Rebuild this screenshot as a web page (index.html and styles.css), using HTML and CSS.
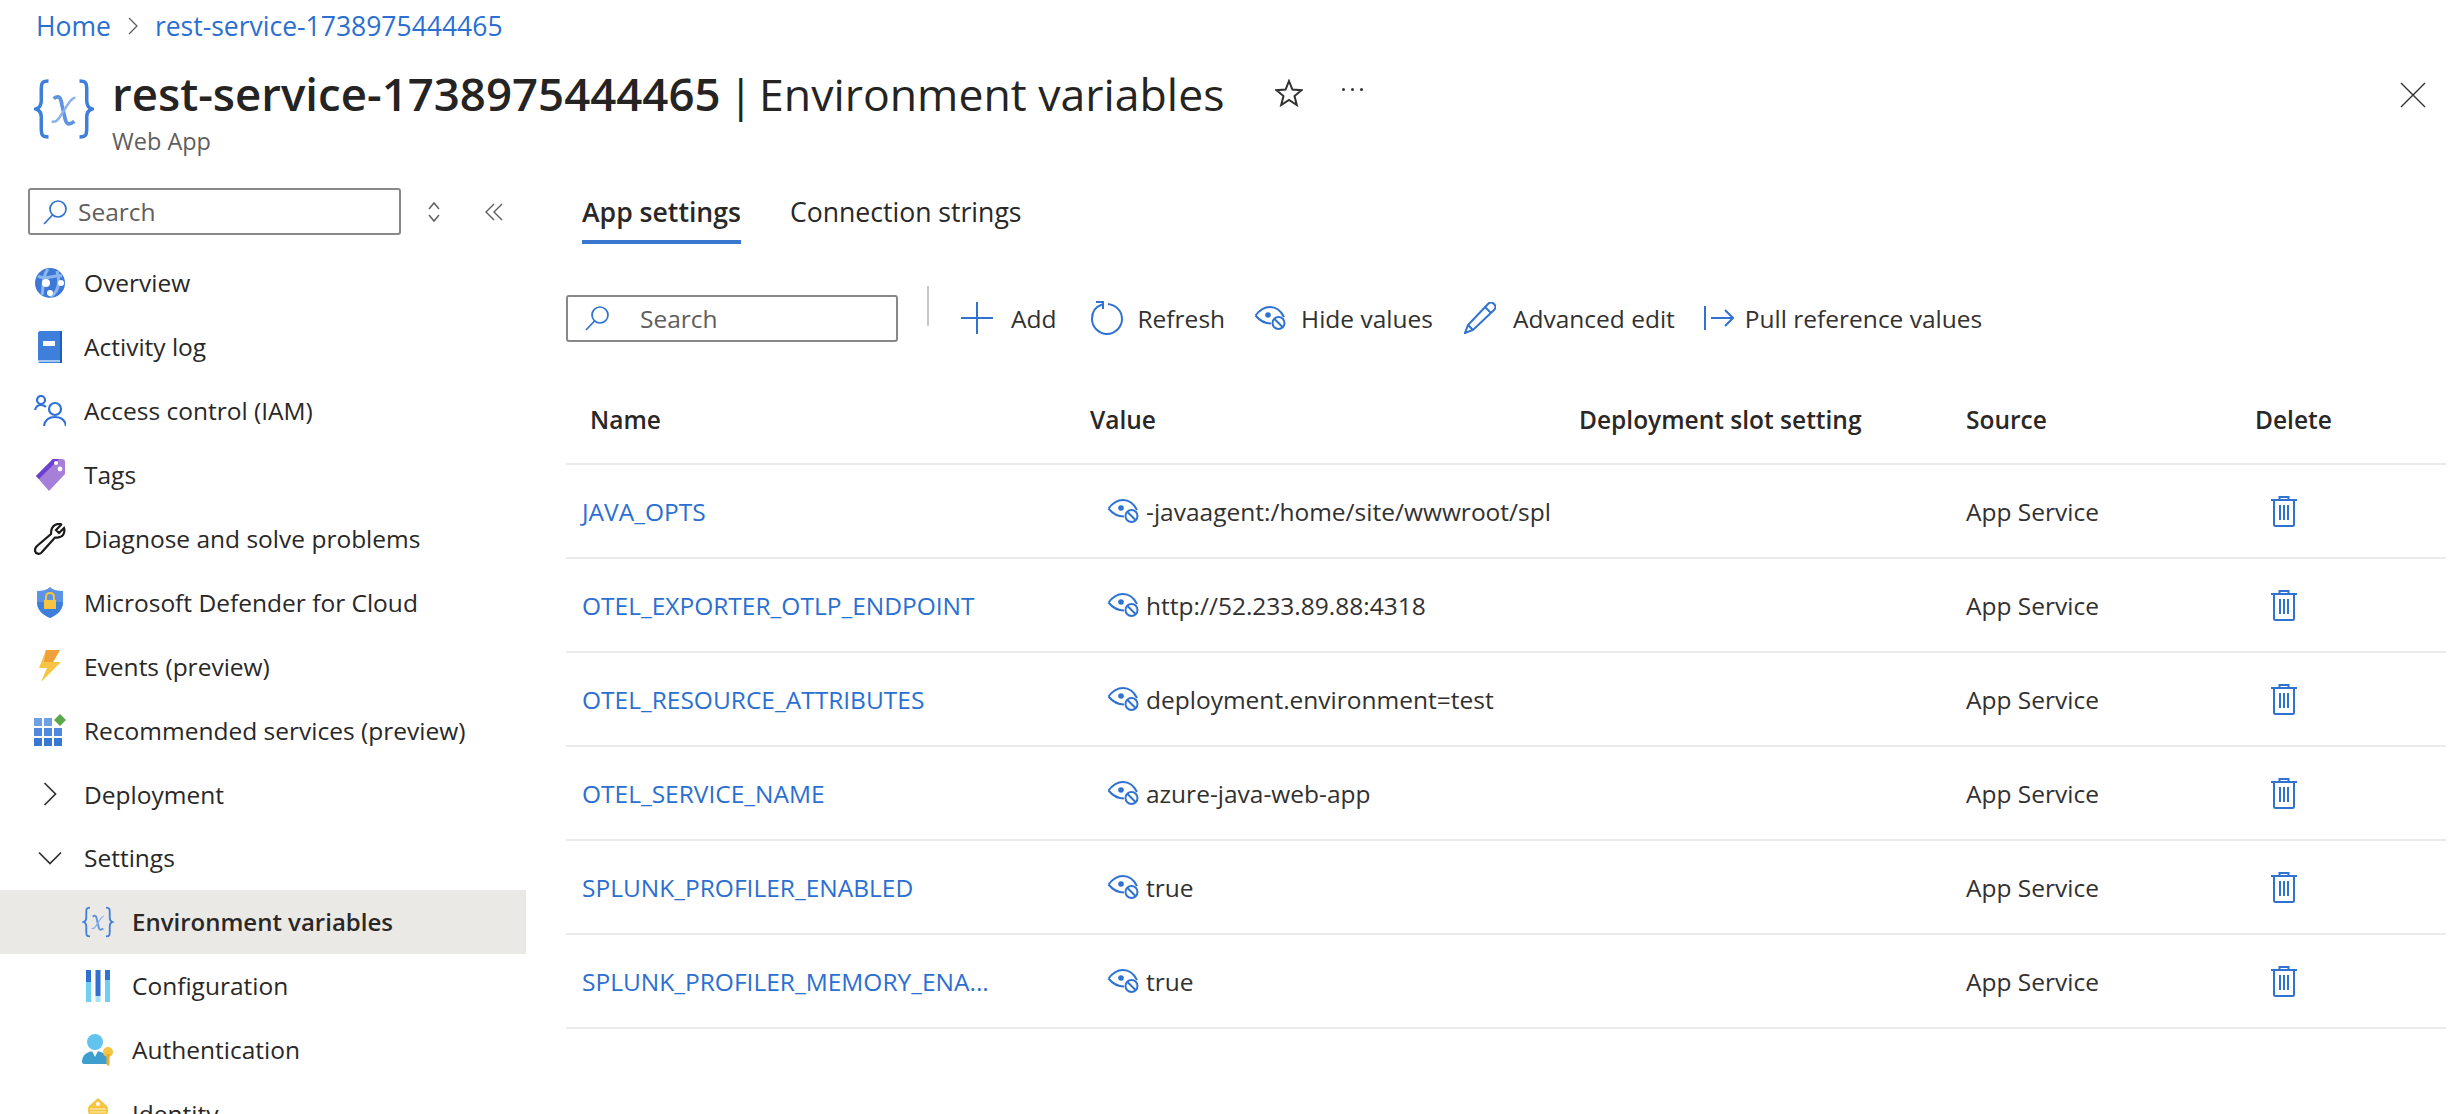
FILE: index.html
```html
<!DOCTYPE html>
<html lang="en">
<head>
  <meta charset="UTF-8">
  <title>rest-service-1738975444465 | Environment variables</title>
  <link rel="stylesheet" href="styles.css">
</head>
<body>
  <!-- Shared icons -->
  <svg class="sprite" width="0" height="0">
    <defs>
      <symbol id="i-envvar" viewBox="0 0 58 60">
        <path d="M14 3C7 3 7 6 7 12V22C7 27 5 29 2 30C5 31 7 33 7 38V48C7 54 7 57 14 57" fill="none" stroke="#3f7fdc" stroke-width="3.4"/>
        <path d="M44 3C51 3 51 6 51 12V22C51 27 53 29 56 30C53 31 51 33 51 38V48C51 54 51 57 44 57" fill="none" stroke="#3f7fdc" stroke-width="3.4"/>
        <path d="M19 20C24 16 26 19 27 26L30 39C31 45 34 46 39 42" fill="none" stroke="#5e93e4" stroke-width="3.6"/>
        <path d="M40 19C35 19 30 31 24 39C22 42 20 43 17 42" fill="none" stroke="#8ab2ee" stroke-width="2.4"/>
      </symbol>
      <symbol id="i-search" viewBox="0 0 26 26">
        <circle cx="16" cy="10" r="8" fill="none" stroke="#2f72d2" stroke-width="1.7"/>
        <path d="M10.5 16L2 25" fill="none" stroke="#2f72d2" stroke-width="1.7"/>
      </symbol>
      <symbol id="i-eyeoff" viewBox="0 0 32 24">
        <path d="M1.5 9.5C6 3.500 11 1 16 1C22 1 27 5 30 11" fill="none" stroke="#2f72d2" stroke-width="2"/>
        <path d="M1.5 9.5C6 15 10 17.5 17 17.5" fill="none" stroke="#2f72d2" stroke-width="2"/>
        <circle cx="14" cy="9" r="2.8" fill="#2f72d2"/>
        <circle cx="24.5" cy="17" r="6" fill="#fff" stroke="#2f72d2" stroke-width="2"/>
        <path d="M20.5 13L28.5 21" stroke="#2f72d2" stroke-width="2"/>
      </symbol>
      <symbol id="i-trash" viewBox="0 0 28 32">
        <path d="M1 5H27M9.5 5V2H18.5V5" fill="none" stroke="#2f72d2" stroke-width="2"/>
        <path d="M4 5V29.5C4 30.5 4.6 31 5.5 31H22.5C23.4 31 24 30.5 24 29.5V5" fill="none" stroke="#2f72d2" stroke-width="2"/>
        <path d="M10 10V25M14 10V25M18 10V25" stroke="#2f72d2" stroke-width="2"/>
      </symbol>
    </defs>
  </svg>

  <nav class="breadcrumb">
    <a href="#">Home</a>
    <svg class="crumb-sep" width="12" height="18" viewBox="0 0 12 18"><path d="M2 1L10 9L2 17" fill="none" stroke="#605e5c" stroke-width="1.3"/></svg>
    <a href="#">rest-service-1738975444465</a>
  </nav>

  <header class="page-header">
    <svg class="header-icon" width="60" height="62"><use href="#i-envvar"/></svg>
    <div class="header-text">
      <div class="title-row">
        <h1 class="title"><b>rest-service-1738975444465</b><span class="title-sep">|</span>Environment variables</h1>
        <svg class="star" width="28" height="28" viewBox="0 0 28 28"><path d="M14 2L17.4 10.6L26.5 11.2L19.5 17L21.8 26L14 21L6.2 26L8.5 17L1.5 11.2L10.6 10.6Z" fill="none" stroke="#323130" stroke-width="2"/></svg>
        <span class="more"><i></i><i></i><i></i></span>
      </div>
      <div class="subtitle">Web App</div>
    </div>
    <svg class="close" width="26" height="26" viewBox="0 0 26 26"><path d="M1 1L25 25M25 1L1 25" stroke="#323130" stroke-width="1.4"/></svg>
  </header>

  <div class="content">
    <aside class="sidebar">
      <div class="side-search-row">
        <div class="search-box side-search">
          <svg width="26" height="26"><use href="#i-search"/></svg>
          <span>Search</span>
        </div>
        <svg class="side-sort" width="14" height="22" viewBox="0 0 14 22"><path d="M2 8L7 2L12 8M2 14L7 20L12 14" fill="none" stroke="#605e5c" stroke-width="1.5"/></svg>
        <svg class="side-collapse" width="18" height="18" viewBox="0 0 18 18"><path d="M9 1L1 9L9 17M17 1L9 9L17 17" fill="none" stroke="#605e5c" stroke-width="1.4"/></svg>
      </div>

      <ul class="nav">
        <li class="nav-item">
          <span class="nav-icon"><svg width="30" height="30" viewBox="0 0 30 30"><circle cx="15" cy="15" r="15" fill="#3d78d8"/><path d="M3 8C10 13 20 6 27 8M7 27C9 20 6 10 13 1M15 29C24 24 25 14 22 3" fill="none" stroke="#8cb6ee" stroke-width="3"/><circle cx="11" cy="15" r="4" fill="#fff"/><circle cx="26" cy="15" r="3" fill="#fff"/><circle cx="15" cy="25" r="3" fill="#fff"/></svg></span>
          Overview
        </li>
        <li class="nav-item">
          <span class="nav-icon"><svg width="26" height="32" viewBox="0 0 26 32"><path d="M1 2C1 1 2 0 3 0H25V32H3C2 32 1 31 1 30Z" fill="#3f7fdc"/><path d="M23 0H25V32H23Z" fill="#1f5fb8"/><path d="M1 29H23V31H1Z" fill="#a9c8f2"/><path d="M6 10H18V15H6Z" fill="#fff"/></svg></span>
          Activity log
        </li>
        <li class="nav-item">
          <span class="nav-icon"><svg width="32" height="32" viewBox="0 0 32 32"><g fill="none" stroke="#2f6fdc" stroke-width="2.2"><circle cx="7" cy="5" r="4"/><path d="M1 15C2 11 4 10 7 10C9 10 11 11 12 12"/><circle cx="21" cy="14" r="6"/><path d="M10 31C11 25 15 22 21 22C27 22 31 25 32 31"/></g></svg></span>
          Access control (IAM)
        </li>
        <li class="nav-item">
          <span class="nav-icon"><svg width="30" height="32" viewBox="0 0 30 32"><path d="M1 17L18 0H27C29 0 30 1 30 3V15L14 32Z" fill="#a57fd8"/><path d="M1 17L18 0H24L4 20Z" fill="#6b3fd0"/><circle cx="21" cy="4" r="2" fill="#fff"/><circle cx="25" cy="10" r="2.4" fill="#fff"/></svg></span>
          Tags
        </li>
        <li class="nav-item">
          <span class="nav-icon"><svg width="32" height="32" viewBox="0 0 32 32"><path d="M21 2C25 0 28 1 27 2L22 7L25 10L30 5C31 8 30 13 26 14C24 15 22 14.500 21 14.500L8 29C6 32 1 31 1 27C1 25 2 24 3 23L17 11C17 8 17 4 21 2Z" fill="none" stroke="#1b1a19" stroke-width="2.200"/></svg></span>
          Diagnose and solve problems
        </li>
        <li class="nav-item">
          <span class="nav-icon"><svg width="26" height="31" viewBox="0 0 26 31"><path d="M13 0C16 3 21 4 26 4V15C26 23 20 28 13 31C6 28 0 23 0 15V4C5 4 10 3 13 0Z" fill="#5b93e6"/><path d="M13 31C6 28 0 23 0 15L26 15C26 23 20 28 13 31Z" fill="#3f7fdc"/><path d="M9 13V10C9 7 11 6 13 6C15 6 17 7 17 10V13" fill="none" stroke="#f6c443" stroke-width="2"/><path d="M7 13H19V22H7Z" fill="#f6c443"/></svg></span>
          Microsoft Defender for Cloud
        </li>
        <li class="nav-item">
          <span class="nav-icon"><svg width="22" height="32" viewBox="0 0 22 32"><path d="M7 0H21L14 12H22L2 32L8 18H0Z" fill="#f6c443"/><path d="M7 0H21L14 12H5Z" fill="#f0a03a"/></svg></span>
          Events (preview)
        </li>
        <li class="nav-item">
          <span class="nav-icon"><svg width="32" height="32" viewBox="0 0 32 32"><g fill="#6fa0e6"><rect x="0" y="4" width="8" height="8"/><rect x="10" y="4" width="8" height="8"/></g><g fill="#4f88de"><rect x="0" y="14" width="8" height="8"/><rect x="10" y="14" width="8" height="8"/><rect x="20" y="14" width="8" height="8"/></g><g fill="#3a76d4"><rect x="0" y="24" width="8" height="8"/><rect x="10" y="24" width="8" height="8"/><rect x="20" y="24" width="8" height="8"/></g><path d="M26 0L32 6L26 12L20 6Z" fill="#5ea84c"/></svg></span>
          Recommended services (preview)
        </li>
        <li class="nav-item">
          <span class="nav-icon"><svg width="14" height="24" viewBox="0 0 14 24"><path d="M1.500 1L12.500 12L1.500 23" fill="none" stroke="#323130" stroke-width="1.700"/></svg></span>
          Deployment
        </li>
        <li class="nav-item">
          <span class="nav-icon"><svg width="24" height="14" viewBox="0 0 24 14"><path d="M1 1.500L12 12.500L23 1.500" fill="none" stroke="#323130" stroke-width="1.700"/></svg></span>
          Settings
        </li>
        <li class="nav-item sub selected">
          <span class="nav-icon"><svg width="32" height="32"><use href="#i-envvar"/></svg></span>
          Environment variables
        </li>
        <li class="nav-item sub">
          <span class="nav-icon"><svg width="24" height="32" viewBox="0 0 24 32"><rect x="0" y="0" width="5" height="12" fill="#2f72d2"/><rect x="0" y="12" width="5" height="20" fill="#6fd0f2"/><rect x="9.500" y="0" width="5" height="26" fill="#2f72d2"/><rect x="9.500" y="26" width="5" height="6" fill="#a8e2f7"/><rect x="19" y="0" width="5" height="10" fill="#2f72d2"/><rect x="19" y="10" width="5" height="22" fill="#6fd0f2"/></svg></span>
          Configuration
        </li>
        <li class="nav-item sub">
          <span class="nav-icon"><svg width="32" height="32" viewBox="0 0 32 32"><circle cx="13" cy="8" r="8" fill="#62c3ee"/><path d="M0 28C0 21 5 17 13 17C21 17 26 21 26 28V30H2C1 30 0 29 0 28Z" fill="#3e9fcf"/><path d="M10 17H16L13 23Z" fill="#fff"/><circle cx="26" cy="18" r="5" fill="#f6c443"/><path d="M24.500 20H27.500V31L26 32L24.500 30Z" fill="#f0a92e"/></svg></span>
          Authentication
        </li>
        <li class="nav-item sub">
          <span class="nav-icon"><svg width="20" height="32" viewBox="0 0 20 32"><path d="M10 0L18 7C20 8 20 10 20 13C20 17 17 18 10 18C3 18 0 17 0 13C0 10 0 8 2 7Z" fill="#f6c443"/><circle cx="10" cy="6" r="2" fill="#fff"/><path d="M2 11H18M2 14H18" stroke="#fbe49a" stroke-width="1.500"/></svg></span>
          Identity
        </li>
      </ul>
    </aside>

    <main class="main">
      <div class="tabs">
        <a class="tab active" href="#">App settings</a>
        <a class="tab" href="#">Connection strings</a>
      </div>

      <div class="toolbar">
        <div class="search-box main-search">
          <svg width="26" height="26"><use href="#i-search"/></svg>
          <span>Search</span>
        </div>
        <span class="tool-divider"></span>
        <button class="tool add">
          <svg width="32" height="32" viewBox="0 0 32 32"><path d="M16 0V32M0 16H32" stroke="#2f72d2" stroke-width="2"/></svg>
          Add
        </button>
        <button class="tool refresh">
          <svg width="32" height="34" viewBox="0 0 32 34"><path d="M11 3.500C4 6 1 11 1 18C1 26 8 33 16 33C24 33 31 26 31 18C31 10 25 4 17 3" fill="none" stroke="#2f72d2" stroke-width="2"/><path d="M5 1H12V8" fill="none" stroke="#2f72d2" stroke-width="2"/></svg>
          Refresh
        </button>
        <button class="tool hide">
          <svg width="32" height="24"><use href="#i-eyeoff"/></svg>
          Hide values
        </button>
        <button class="tool edit">
          <svg width="32" height="32" viewBox="0 0 32 32"><path d="M24 2C26 0 28 0 30 2C32 4 32 6 30 8L9 28L1 31L4 23Z M4 23L9 28 M21 5L27 11" fill="none" stroke="#2f72d2" stroke-width="2"/></svg>
          Advanced edit
        </button>
        <button class="tool pull">
          <svg width="30" height="26" viewBox="0 0 30 26"><path d="M1 1V25M7 13H29M21 5L29 13L21 21" fill="none" stroke="#2f72d2" stroke-width="2"/></svg>
          Pull reference values
        </button>
      </div>

      <div class="table">
        <div class="row head">
          <div class="cell name">Name</div>
          <div class="cell">Value</div>
          <div class="cell">Deployment slot setting</div>
          <div class="cell">Source</div>
          <div class="cell">Delete</div>
        </div>
        <div class="row">
          <div class="cell name"><a href="#">JAVA_OPTS</a></div>
          <div class="cell value"><svg width="32" height="24"><use href="#i-eyeoff"/></svg><span>-javaagent:/home/site/wwwroot/spl</span></div>
          <div class="cell"></div>
          <div class="cell">App Service</div>
          <div class="cell trash"><svg width="28" height="32"><use href="#i-trash"/></svg></div>
        </div>
        <div class="row">
          <div class="cell name"><a href="#">OTEL_EXPORTER_OTLP_ENDPOINT</a></div>
          <div class="cell value"><svg width="32" height="24"><use href="#i-eyeoff"/></svg><span>http://52.233.89.88:4318</span></div>
          <div class="cell"></div>
          <div class="cell">App Service</div>
          <div class="cell trash"><svg width="28" height="32"><use href="#i-trash"/></svg></div>
        </div>
        <div class="row">
          <div class="cell name"><a href="#">OTEL_RESOURCE_ATTRIBUTES</a></div>
          <div class="cell value"><svg width="32" height="24"><use href="#i-eyeoff"/></svg><span>deployment.environment=test</span></div>
          <div class="cell"></div>
          <div class="cell">App Service</div>
          <div class="cell trash"><svg width="28" height="32"><use href="#i-trash"/></svg></div>
        </div>
        <div class="row">
          <div class="cell name"><a href="#">OTEL_SERVICE_NAME</a></div>
          <div class="cell value"><svg width="32" height="24"><use href="#i-eyeoff"/></svg><span>azure-java-web-app</span></div>
          <div class="cell"></div>
          <div class="cell">App Service</div>
          <div class="cell trash"><svg width="28" height="32"><use href="#i-trash"/></svg></div>
        </div>
        <div class="row">
          <div class="cell name"><a href="#">SPLUNK_PROFILER_ENABLED</a></div>
          <div class="cell value"><svg width="32" height="24"><use href="#i-eyeoff"/></svg><span>true</span></div>
          <div class="cell"></div>
          <div class="cell">App Service</div>
          <div class="cell trash"><svg width="28" height="32"><use href="#i-trash"/></svg></div>
        </div>
        <div class="row">
          <div class="cell name"><a href="#">SPLUNK_PROFILER_MEMORY_ENA...</a></div>
          <div class="cell value"><svg width="32" height="24"><use href="#i-eyeoff"/></svg><span>true</span></div>
          <div class="cell"></div>
          <div class="cell">App Service</div>
          <div class="cell trash"><svg width="28" height="32"><use href="#i-trash"/></svg></div>
        </div>
      </div>
    </main>
  </div>
</body>
</html>
```

FILE: styles.css
```css
/* Page */
html, body {
  height: 100%;
}
body {
  margin: 0;
  background: #fff;
  color: #323130;
  font-family: "Open Sans", "Noto Sans", sans-serif;
  font-size: 24.5px;
  overflow: hidden;
}
a {
  color: #2b6fd1;
  text-decoration: none;
}
.sprite {
  display: block;
  height: 0;
}

/* Breadcrumb */
.breadcrumb {
  display: flex;
  align-items: center;
  height: 52px;
  padding-left: 36px;
  gap: 16px;
  font-size: 26.5px;
}

/* Header */
.page-header {
  display: flex;
  align-items: flex-start;
  padding: 22px 34px 0 34px;
  height: 114px;
  box-sizing: border-box;
}
.header-icon {
  margin-top: 4px;
  flex: none;
}
.header-text {
  margin-left: 18px;
  flex: 1;
}
.title-row {
  display: flex;
  align-items: center;
  height: 38px;
}
.title {
  margin: 0;
  font-size: 44.6px;
  font-weight: 400;
  color: #252423;
  white-space: nowrap;
}
.title b {
  font-size: 45.6px;
  font-weight: 600;
}
.title-sep {
  margin: 0 6px 0 8px;
}
.star {
  margin-left: 51px;
}
.more {
  display: flex;
  gap: 6px;
  margin-left: 39px;
  margin-bottom: 8px;
}
.more i {
  width: 3px;
  height: 3px;
  background: #323130;
  border-radius: 50%;
}
.subtitle {
  margin-top: 13px;
  font-size: 23.5px;
  color: #605e5c;
}
.close {
  margin-top: 8px;
}

/* Search boxes */
.search-box {
  display: flex;
  align-items: center;
  box-sizing: border-box;
  border: 2px solid #8a8886;
  border-radius: 3px;
  color: #605e5c;
}

/* Layout below the header */
.content {
  display: flex;
}
.sidebar {
  width: 526px;
  flex: none;
}
.side-search-row {
  display: flex;
  align-items: center;
  padding: 22px 0 0 28px;
  height: 47px;
}
.side-search {
  width: 373px;
  height: 47px;
  padding-left: 12px;
  gap: 10px;
}
.side-sort {
  margin-left: 26px;
}
.side-collapse {
  margin-left: 44px;
}

/* Side nav */
.nav {
  list-style: none;
  margin: 16px 0 0;
  padding: 0;
}
.nav-item {
  display: flex;
  align-items: center;
  height: 63.9px;
  padding-left: 34px;
  color: #292827;
  white-space: nowrap;
}
.nav-icon {
  display: flex;
  align-items: center;
  justify-content: center;
  width: 32px;
  height: 32px;
  margin-right: 18px;
}
.nav-item.sub {
  padding-left: 82px;
}
.nav-item.selected {
  background: #ebe9e6;
  font-size: 24px;
  font-weight: 600;
}

/* Main pane */
.main {
  flex: 1;
  padding: 0 14px 0 40px;
}
.tabs {
  display: flex;
  gap: 49px;
  padding-left: 16px;
  height: 59px;
  margin-top: 19px;
}
.tab {
  color: #292827;
  font-size: 26.6px;
  height: 59px;
  line-height: 54px;
  box-sizing: border-box;
}
.tab.active {
  font-weight: 600;
  border-bottom: 4px solid #3a78d0;
}

/* Toolbar */
.toolbar {
  display: flex;
  align-items: center;
  margin-top: 37px;
  height: 60px;
}
.main-search {
  width: 332px;
  height: 47px;
  padding-left: 16px;
  gap: 30px;
  margin-top: 14px;
}
.tool-divider {
  width: 2px;
  height: 40px;
  background: #c8c6c4;
  margin: -10px 0 0 29px;
}
.tool {
  display: flex;
  align-items: center;
  gap: 18px;
  border: 0;
  padding: 0;
  margin: 14px 0 0 32px;
  background: none;
  color: #323130;
  font: inherit;
  white-space: nowrap;
}
.tool.refresh {
  gap: 14px;
  margin-left: 35px;
}
.tool.hide {
  gap: 15px;
  margin-left: 29px;
}
.tool.edit {
  gap: 17px;
  margin-left: 31px;
}
.tool.pull {
  gap: 11px;
  margin-left: 29px;
}

/* Table */
.table {
  margin-top: 34px;
}
.row {
  display: grid;
  grid-template-columns: 524px 489px 387px 289px 1fr;
  align-items: center;
  height: 94px;
  box-sizing: border-box;
  border-bottom: 2px solid #edebe9;
}
.row.head {
  height: 90px;
  font-weight: 600;
  color: #292827;
}
.cell {
  white-space: nowrap;
  min-width: 0;
}
.cell.name {
  padding-left: 16px;
}
.head .cell.name {
  padding-left: 24px;
}
.cell.value {
  display: flex;
  align-items: center;
  gap: 7px;
  padding-left: 17px;
  overflow: hidden;
  margin-right: 24px;
}
.cell.value span {
  overflow: hidden;
}
.cell.value svg {
  flex: none;
}
.cell.trash {
  padding-left: 15px;
  display: flex;
}
```
